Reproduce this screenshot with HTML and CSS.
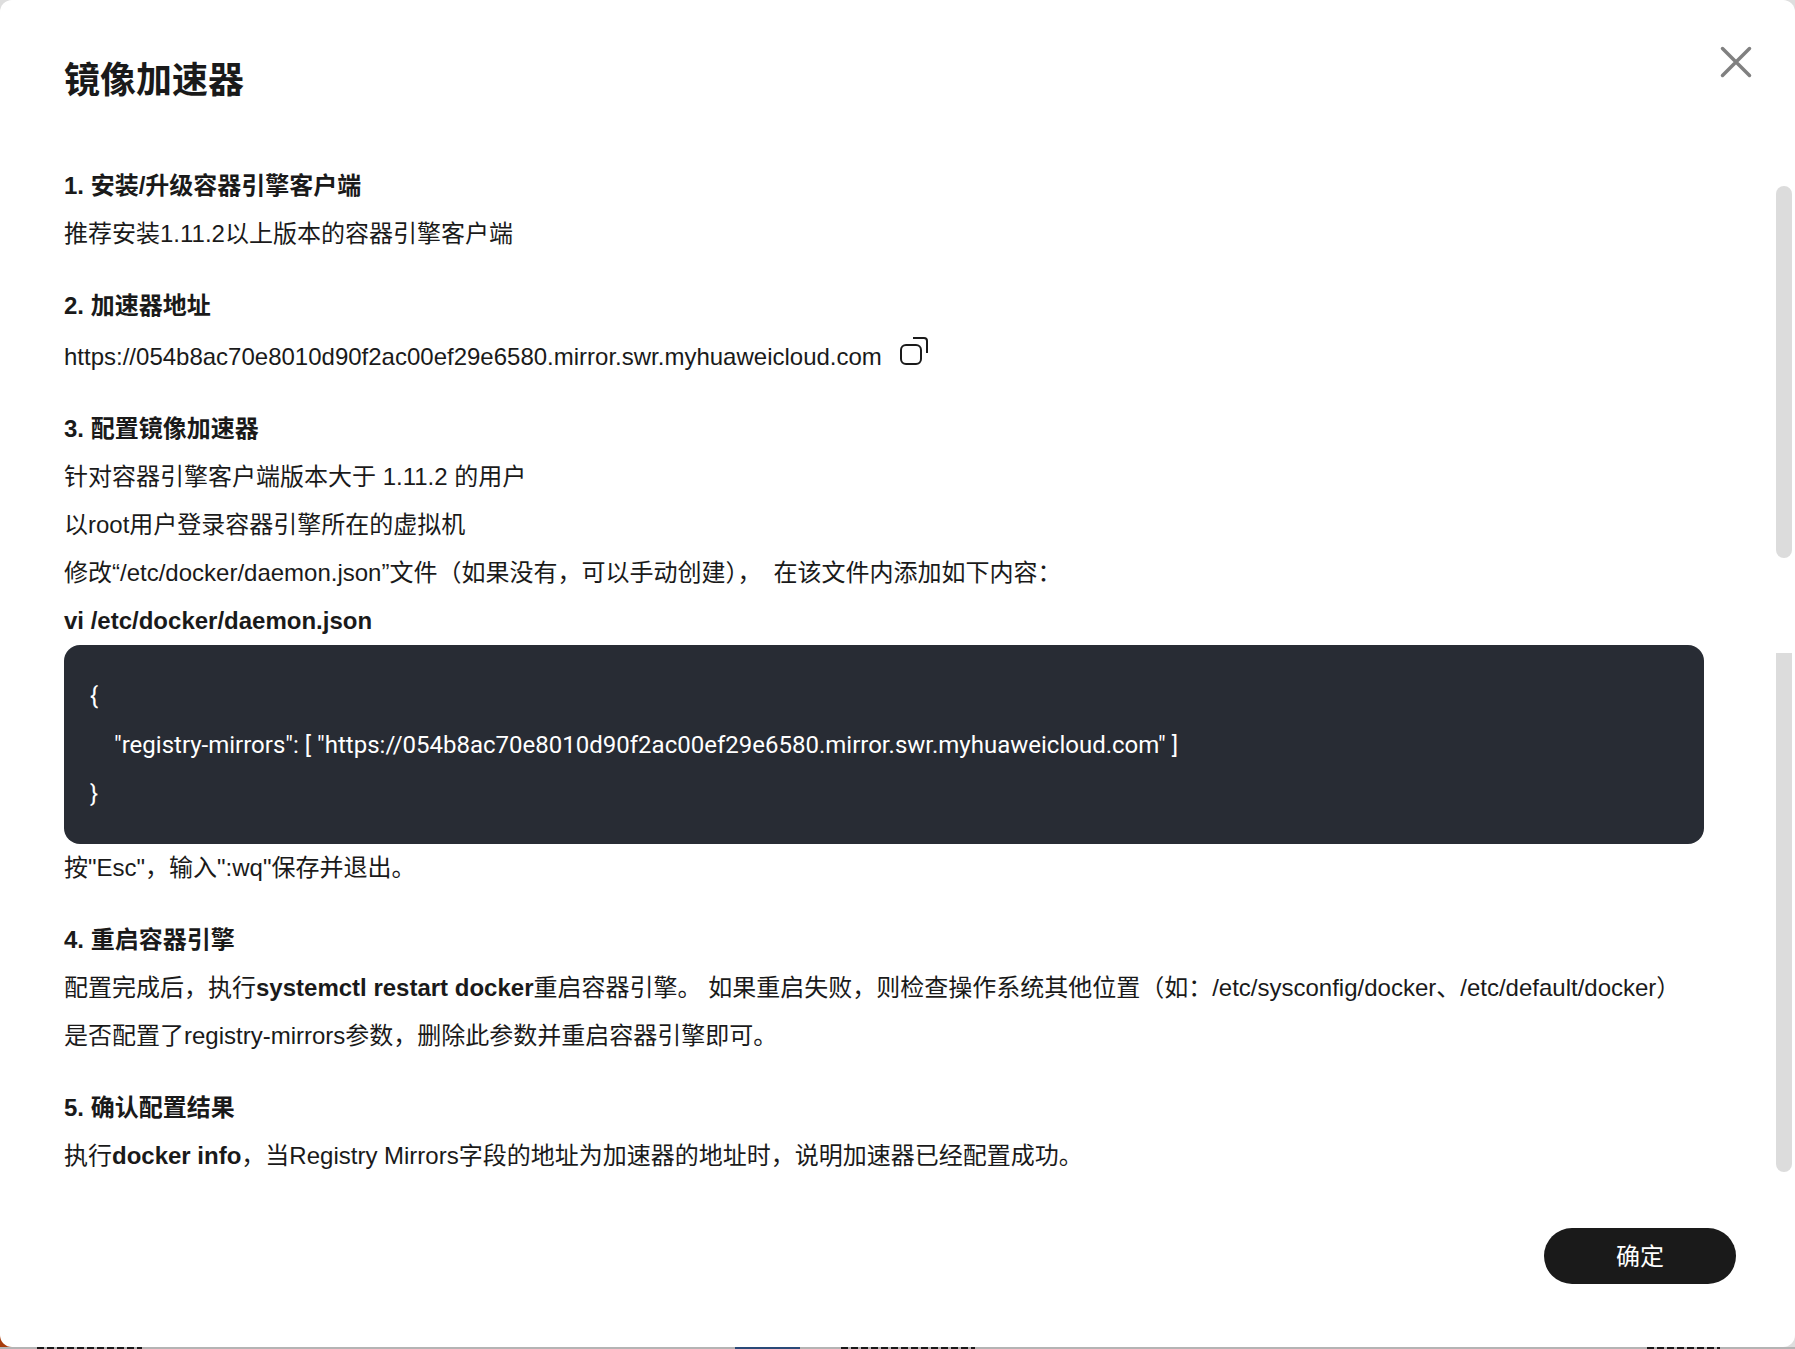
FILE: index.html
```html
<!DOCTYPE html>
<html lang="zh-CN">
<head>
    <meta charset="UTF-8">
    <title>镜像加速器</title>
    <link rel="stylesheet" href="styles.css">
</head>
<body>
    <div class="corner-orange"></div>
    <div class="modal">
        <h1 class="modal-title">镜像加速器</h1>
        <button class="close-btn" aria-label="close">
            <svg width="34" height="34" viewBox="0 0 34 34"><path d="M3.5 3.5 L30.5 30.5 M30.5 3.5 L3.5 30.5" fill="none" stroke="#808080" stroke-width="3.5" stroke-linecap="round"/></svg>
        </button>

        <div class="modal-body">
            <section class="step">
                <h2>1. 安装/升级容器引擎客户端</h2>
                <p>推荐安装1.11.2以上版本的容器引擎客户端</p>
            </section>

            <section class="step">
                <h2>2. 加速器地址</h2>
                <p class="url-row">
                    <span>https://054b8ac70e8010d90f2ac00ef29e6580.mirror.swr.myhuaweicloud.com</span>
                    <svg class="copy-icon" width="30" height="30" viewBox="0 0 30 30"><rect x="1" y="8" width="20" height="19" rx="5" fill="none" stroke="#1a1a1a" stroke-width="2"/><path d="M13 1 H24 Q27 1 27 4 V16" fill="none" stroke="#1a1a1a" stroke-width="2"/></svg>
                </p>
            </section>

            <section class="step">
                <h2>3. 配置镜像加速器</h2>
                <p>针对容器引擎客户端版本大于 1.11.2 的用户</p>
                <p>以root用户登录容器引擎所在的虚拟机</p>
                <p>修改“/etc/docker/daemon.json”文件（如果没有，可以手动创建），&ensp;在该文件内添加如下内容：</p>
                <p><b>vi /etc/docker/daemon.json</b></p>
                <div class="code-block">
                    <div>{</div>
                    <div class="indent">"registry-mirrors": [ "https://054b8ac70e8010d90f2ac00ef29e6580.mirror.swr.myhuaweicloud.com" ]</div>
                    <div>}</div>
                </div>
                <p>按"Esc"，输入":wq"保存并退出。</p>
            </section>

            <section class="step">
                <h2>4. 重启容器引擎</h2>
                <p>配置完成后，执行<b>systemctl restart docker</b>重启容器引擎。 如果重启失败，则检查操作系统其他位置（如：/etc/sysconfig/docker、/etc/default/docker）<br>是否配置了registry-mirrors参数，删除此参数并重启容器引擎即可。</p>
            </section>

            <section class="step">
                <h2>5. 确认配置结果</h2>
                <p>执行<b>docker info</b>，当Registry Mirrors字段的地址为加速器的地址时，说明加速器已经配置成功。</p>
            </section>
        </div>

        <div class="modal-footer">
            <button class="ok-btn">确定</button>
        </div>

        <div class="scroll-thumb thumb-upper"></div>
        <div class="scroll-thumb thumb-lower"></div>
    </div>

    <!-- sliver of the page behind the dialog -->
    <div class="behind">
        <span class="frag frag-a"></span>
        <span class="frag frag-b"></span>
        <span class="frag frag-c"></span>
        <span class="frag frag-d"></span>
    </div>
</body>
</html>
```

FILE: styles.css
```css
html, body {
    margin: 0;
    padding: 0;
}

body {
    position: relative;
    width: 1795px;
    height: 1349px;
    overflow: hidden;
    background-color: #dedede;
    font-family: "Liberation Sans", "Noto Sans CJK SC", sans-serif;
    font-size: 24px;
    color: #1a1a1a;
}

.corner-orange {
    position: absolute;
    left: 0;
    bottom: 2px;
    width: 16px;
    height: 16px;
    background-color: #a83c0c;
}

.modal {
    position: relative;
    box-sizing: border-box;
    height: 1347px;
    padding: 53px 91px 0 64px;
    background-color: #fff;
    border-radius: 12px;
}

.modal-title {
    margin: 0 0 53px 0;
    font-size: 36px;
    line-height: 56px;
    font-weight: 700;
}

.close-btn {
    position: absolute;
    top: 45px;
    left: 1719px;
    padding: 0;
    border: none;
    background: none;
    line-height: 0;
}

.step {
    margin-bottom: 24px;
}

.step:last-child {
    margin-bottom: 0;
}

.step h2 {
    margin: 0;
    font-size: 24px;
    line-height: 48px;
    font-weight: 700;
}

.step p {
    margin: 0;
    line-height: 48px;
}

.step b {
    font-weight: 700;
}

.step .url-row {
    display: flex;
    align-items: center;
    gap: 18px;
    height: 49px;
    padding-top: 2px;
}

.copy-icon {
    margin-top: -9px;
}

.code-block {
    box-sizing: border-box;
    height: 199px;
    padding: 27px 26px;
    border-radius: 16px;
    background-color: #282c34;
    color: #fff;
    font-family: Roboto, "Noto Sans CJK SC", sans-serif;
    line-height: 49px;
}

.code-block .indent {
    padding-left: 24px;
}

.modal-footer {
    display: flex;
    justify-content: flex-end;
    margin: 48px -32px 0 0;
}

.ok-btn {
    width: 192px;
    height: 56px;
    padding: 0 0 4px 0;
    border: none;
    border-radius: 28px;
    background-color: #1a1a1a;
    color: #fff;
    font-family: inherit;
    font-size: 24px;
}

.scroll-thumb {
    position: absolute;
    left: 1776px;
    width: 16px;
    background-color: #dcdcdc;
}

.thumb-upper {
    top: 186px;
    height: 372px;
    border-radius: 8px;
}

.thumb-lower {
    top: 653px;
    height: 519px;
    border-radius: 0 0 8px 8px;
}

.behind {
    position: relative;
    height: 2px;
    background-color: #b4b4b4;
}

.frag {
    position: absolute;
    top: 0;
    height: 2px;
    background-image: repeating-linear-gradient(90deg, #1a1a1a 0 7px, #b4b4b4 7px 10px);
}

.frag-a {
    left: 37px;
    width: 105px;
}

.frag-b {
    left: 735px;
    width: 65px;
    background-image: none;
    background-color: #2a4a78;
}

.frag-c {
    left: 841px;
    width: 134px;
}

.frag-d {
    left: 1647px;
    width: 73px;
}
```
